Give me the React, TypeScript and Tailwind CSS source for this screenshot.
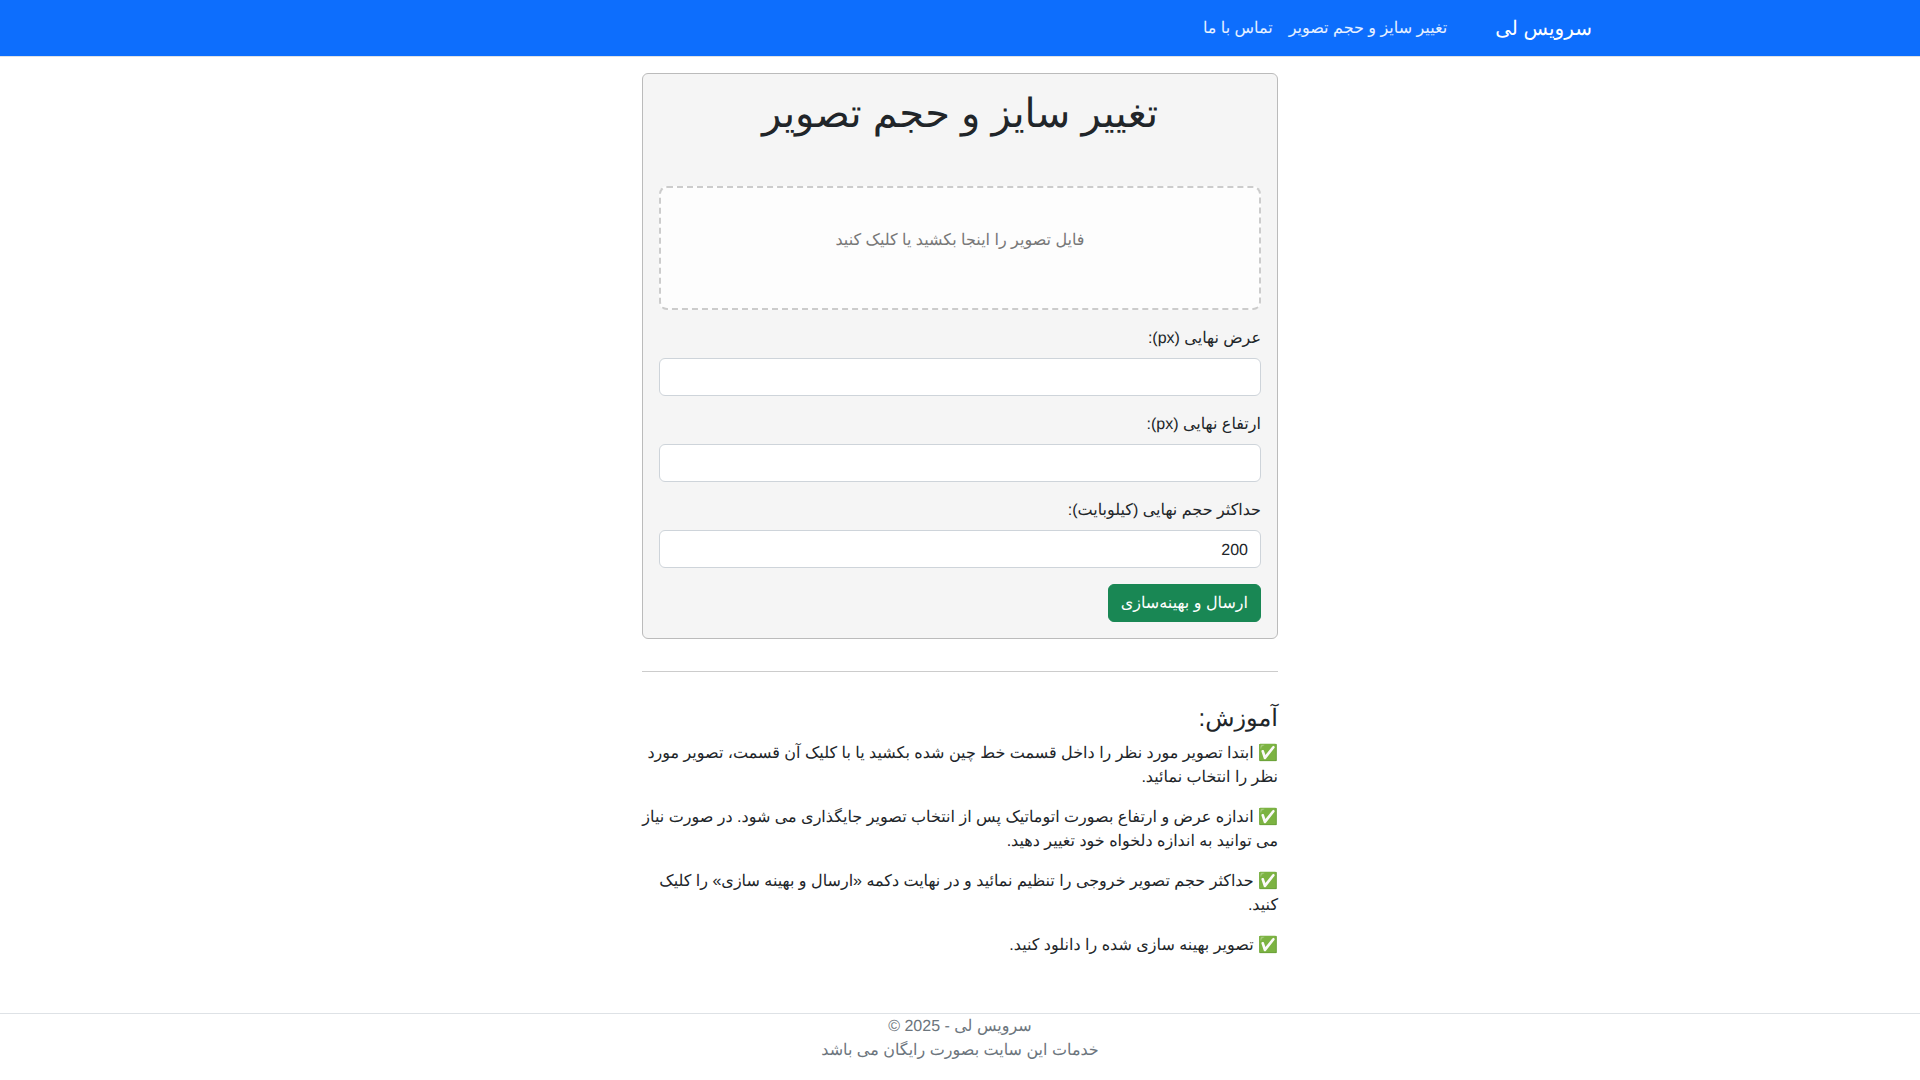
import React from "react";

const fields = [
  { label: "عرض نهایی (px):", value: "" },
  { label: "ارتفاع نهایی (px):", value: "" },
  { label: "حداکثر حجم نهایی (کیلوبایت):", value: "200" },
];

const steps = [
  "✅ ابتدا تصویر مورد نظر را داخل قسمت خط چین شده بکشید یا با کلیک آن قسمت، تصویر مورد نظر را انتخاب نمائید.",
  "✅ اندازه عرض و ارتفاع بصورت اتوماتیک پس از انتخاب تصویر جایگذاری می شود. در صورت نیاز می توانید به اندازه دلخواه خود تغییر دهید.",
  "✅ حداکثر حجم تصویر خروجی را تنظیم نمائید و در نهایت دکمه «ارسال و بهینه سازی» را کلیک کنید.",
  "✅ تصویر بهینه سازی شده را دانلود کنید.",
];

export default function App() {
  return (
    <div dir="rtl" className="min-h-screen bg-white text-base leading-6 text-[#212529] font-['Liberation_Sans',sans-serif] [text-rendering:geometricPrecision]">
      <nav className="h-[57px] border-b border-[#dee2e6] bg-[#0d6efd]">
        <div className="mx-auto flex h-14 w-[1320px] items-center pt-[2px] pr-[28px]">
          <a href="#" className="ml-[48px] text-xl text-white">
            سرویس لی
          </a>
          <div className="flex gap-4">
            <a href="#" className="text-white/90">
              تغییر سایز و حجم تصویر
            </a>
            <a href="#" className="text-white/90">
              تماس با ما
            </a>
          </div>
        </div>
      </nav>

      <main className="mx-auto mt-4 w-[636px]">
        <form className="rounded-md border border-[#bbb] bg-[#f5f5f5] p-4">
          <h1 className="mb-12 text-center text-[40px] leading-[48px] font-normal">تغییر سایز و حجم تصویر</h1>

          <div className="mb-4 rounded-lg border-2 border-dashed border-[#ccc] bg-[#fdfdfd] p-10 text-center text-[#777]">
            <p className="mb-[15px] pt-px">فایل تصویر را اینجا بکشید یا کلیک کنید</p>
          </div>

          {fields.map((field) => (
            <div key={field.label} className="mb-4">
              <label className="mb-[7px] block pt-px">{field.label}</label>
              <input
                type="number"
                defaultValue={field.value}
                className="block h-[38px] w-full rounded-md border border-[#ced4da] bg-white px-3 pt-2 pb-1 text-[#212529] [text-rendering:geometricPrecision]"
              />
            </div>
          ))}

          <button type="button" className="rounded-md border border-[#198754] bg-[#198754] px-3 pt-[7px] pb-[5px] text-white [text-rendering:geometricPrecision]">
            ارسال و بهینه‌سازی
          </button>
        </form>

        <hr className="my-8 border-t border-[#ccc]" />

        <h4 className="mb-2 text-2xl leading-[29px] font-normal">آموزش:</h4>
        {steps.map((step) => (
          <p key={step} className="mb-[15px] pt-px">
            {step}
          </p>
        ))}
      </main>

      <footer className="mt-[55px] border-t border-[#dee2e6] pt-px pb-[15px] text-center text-[#6c757d]">
        <div>سرویس لی - 2025 ©</div>
        <div>خدمات این سایت بصورت رایگان می باشد</div>
      </footer>
    </div>
  );
}
